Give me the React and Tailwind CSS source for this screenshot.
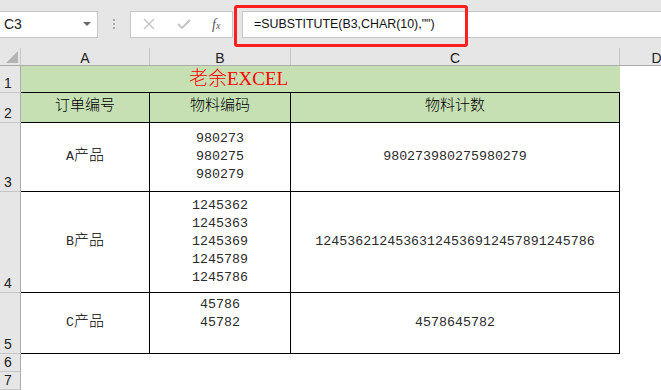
import React from "react";

const SANS = "font-['Liberation_Sans',Arial,sans-serif]";
const CJK = "font-['Liberation_Mono','Noto_Sans_CJK_SC',monospace] font-light text-[15px]";
const MONO = "font-['Liberation_Mono',monospace] text-[13.3px] text-[#2a2a2a]";

function Lines({ items }) {
  return (
    <div className={"flex flex-col items-center leading-[18px] " + MONO}>
      {items.map((t) => (
        <div key={t}>{t}</div>
      ))}
    </div>
  );
}

function Product({ letter }) {
  return (
    <span className={CJK}>
      <span className="text-[13.3px] font-normal text-[#2a2a2a]">{letter}</span>产品
    </span>
  );
}

function RowHead({ n, h }) {
  return (
    <div className={"w-[21px] shrink-0 bg-[#e6e6e6] border-r border-r-[#ababab] border-b border-b-[#c6c6c6] flex items-end pl-[4px] text-[14px] text-[#222] leading-[17px] " + SANS + " " + h}>
      {n}
    </div>
  );
}

const cellA = "w-[129px] shrink-0 flex items-center justify-center border-r border-b border-black";
const cellB = "w-[141px] shrink-0 flex items-center justify-center border-r border-b border-black";
const cellC = "w-[329px] shrink-0 flex items-center justify-center border-r border-b border-black";

function DataRow({ n, h, green, a, b, c }) {
  const bg = green ? " bg-[#c6e0b4]" : "";
  return (
    <div className={"flex " + h}>
      <RowHead n={n} h={h} />
      <div className={cellA + bg}>{a}</div>
      <div className={cellB + bg}>{b}</div>
      <div className={cellC + bg}>{c}</div>
    </div>
  );
}

function EmptyRow({ n }) {
  return (
    <div className="flex h-[18px]">
      <RowHead n={n} h="h-[18px]" />
    </div>
  );
}

export default function App() {
  return (
    <div className="relative w-[661px] h-[390px] overflow-hidden bg-white">
      {/* toolbar */}
      <div className="h-[48px] bg-[#e6e6e6] flex items-center">
        <div className="h-[27px] w-[98px] bg-white border border-[#c6c6c6] border-l-0 flex items-center justify-between pl-[4px] pr-[5px]">
          <span className={"text-[14px] text-[#222] " + SANS}>C3</span>
          <svg width="10" height="6" viewBox="0 0 10 6"><path d="M1 1 L9 1 L5 5 Z" fill="#666" /></svg>
        </div>
        <div className="w-[32px] flex flex-col items-center gap-[2px]">
          <div className="w-[2px] h-[2px] bg-[#aaa]" />
          <div className="w-[2px] h-[2px] bg-[#aaa]" />
          <div className="w-[2px] h-[2px] bg-[#aaa]" />
        </div>
        <div className="h-[27px] w-[103px] bg-white border border-[#c6c6c6] flex items-center">
          <svg className="ml-[12px]" width="12" height="12" viewBox="0 0 12 12"><path d="M1 1 L11 11 M11 1 L1 11" stroke="#c3c3c3" strokeWidth="1.4" /></svg>
          <svg className="ml-[22px]" width="14" height="12" viewBox="0 0 14 12"><path d="M1 6 L5 10 L13 2" stroke="#c3c3c3" strokeWidth="1.8" fill="none" /></svg>
          <span className="ml-[21px] text-[14px] italic text-[#555] font-['Liberation_Serif',serif]">f<span className="text-[10px]">x</span></span>
        </div>
        <div className="ml-[9px] h-[27px] flex-1 bg-white border border-[#c6c6c6] border-r-0 flex items-center pl-[11px]">
          <span className={"text-[12.4px] text-[#111] " + SANS}>=SUBSTITUTE(B3,CHAR(10),"")</span>
        </div>
      </div>
      {/* red annotation */}
      <div className="absolute left-[234px] top-[5px] w-[234px] h-[42px] border-[3px] border-[#ff1f1f] rounded-[3px]" />

      {/* column headers */}
      <div className={"flex h-[18px] bg-[#e6e6e6] border-b border-[#ababab] text-[14px] text-[#222] leading-none " + SANS}>
        <div className="w-[21px] shrink-0 border-r border-[#c6c6c6] relative">
          <svg className="absolute right-[2px] bottom-[2px]" width="12" height="12" viewBox="0 0 12 12"><path d="M12 0 L12 12 L0 12 Z" fill="#b4b4b4" /></svg>
        </div>
        <div className="w-[129px] shrink-0 border-r border-[#c6c6c6] flex items-center justify-center pt-[2px]">A</div>
        <div className="w-[141px] shrink-0 border-r border-[#c6c6c6] flex items-center justify-center pt-[2px]">B</div>
        <div className="w-[329px] shrink-0 border-r border-[#c6c6c6] flex items-center justify-center pt-[2px]">C</div>
        <div className="w-[74px] shrink-0 border-r border-[#c6c6c6] flex items-center justify-center pt-[2px]">D</div>
      </div>

      {/* row 1 */}
      <div className="flex h-[27px]">
        <RowHead n="1" h="h-[27px]" />
        <div className="w-[599px] shrink-0 bg-[#c6e0b4] border-b border-black flex items-center pl-[168px]">
          <span className="text-[19px] text-[#ff0000] leading-[26px] font-['Liberation_Serif','Noto_Sans_CJK_SC',serif] font-light">老余EXCEL</span>
        </div>
      </div>

      <DataRow
        n="2"
        h="h-[30px]"
        green
        a={<span className={CJK}>订单编号</span>}
        b={<span className={CJK}>物料编码</span>}
        c={<span className={CJK}>物料计数</span>}
      />
      <DataRow
        n="3"
        h="h-[69px]"
        a={<Product letter="A" />}
        b={<Lines items={["980273", "980275", "980279"]} />}
        c={<span className={MONO}>980273980275980279</span>}
      />
      <DataRow
        n="4"
        h="h-[101px]"
        a={<Product letter="B" />}
        b={<Lines items={["1245362", "1245363", "1245369", "1245789", "1245786"]} />}
        c={<span className={MONO}>12453621245363124536912457891245786</span>}
      />
      <DataRow
        n="5"
        h="h-[61px]"
        a={<Product letter="C" />}
        b={<div className="pb-[18px]"><Lines items={["45786", "45782"]} /></div>}
        c={<span className={MONO}>4578645782</span>}
      />
      <EmptyRow n="6" />
      <EmptyRow n="7" />
    </div>
  );
}
